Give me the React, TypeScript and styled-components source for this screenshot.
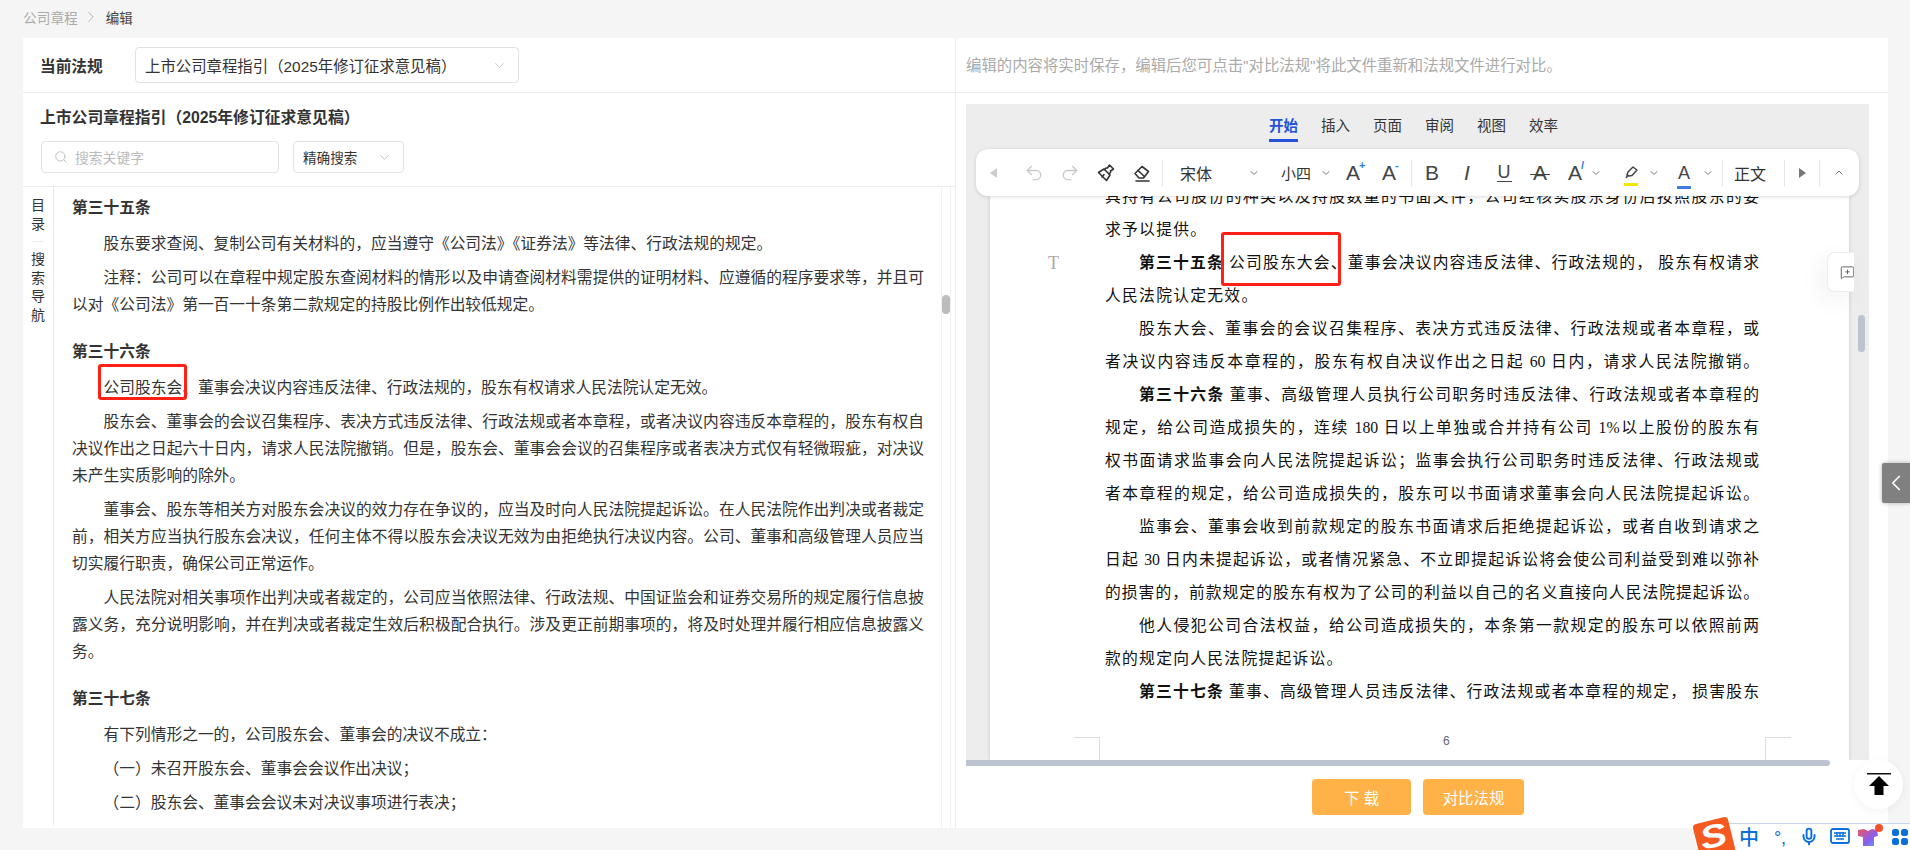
import React from "react";
import styled, { createGlobalStyle } from "styled-components";
import { ChevronDown, ChevronLeft, ChevronRight, ChevronUp, MessageSquarePlus, Mic, Redo2, Search, Undo2 } from "lucide-react";

const SANS = '"Liberation Sans", "Noto Sans CJK SC", sans-serif';
const SERIF = '"Liberation Serif", "Noto Sans CJK SC", serif';

const Global = createGlobalStyle`
  html, body { margin: 0; padding: 0; background: #f5f5f5; }
  body { font-family: ${SANS}; color: #333; }
  * { box-sizing: border-box; }
`;

const Screen = styled.div`
  position: relative;
  width: 1910px;
  height: 850px;
  overflow: hidden;
  background: #f5f5f5;
`;

const Crumbs = styled.div`
  height: 38px;
  padding-left: 23px;
  display: flex;
  align-items: center;
  gap: 4px;
  font-size: 13.7px;
  padding-bottom: 4px;
  color: #aaa;
  svg { color: #999; }
  b { font-weight: 400; color: #444; margin-left: 2px; font-size: 13.5px; }
`;

const Shell = styled.div`
  margin-left: 23px;
  width: 1865px;
  height: 790px;
  background: #fff;
  display: grid;
  grid-template-columns: 933px 1fr;
`;

const LeftPanel = styled.section`
  display: flex;
  flex-direction: column;
  min-height: 0;
  border-right: 1px solid #ececec;
`;

const RightPanel = styled.section`
  display: flex;
  flex-direction: column;
  min-height: 0;
`;

const HeadRow = styled.div`
  height: 55px;
  flex: none;
  display: flex;
  align-items: center;
  border-bottom: 1px solid #ececec;
  padding-left: 17px;
`;

const RuleLabel = styled.span`
  font-size: 15.7px;
  font-weight: 700;
  color: #333;
  width: 95px;
`;

const SelectBox = styled.div<{ $w: number; $h: number; $size: number }>`
  width: ${(p) => p.$w}px;
  height: ${(p) => p.$h}px;
  font-size: ${(p) => p.$size}px;
  border: 1px solid #e2e2e2;
  border-radius: 4px;
  display: flex;
  align-items: center;
  justify-content: space-between;
  padding: 0 11px 0 9px;
  color: #333;
  svg { color: #bbb; flex: none; }
`;

const Notice = styled.div`
  height: 55px;
  flex: none;
  display: flex;
  align-items: center;
  padding: 0 0 3px 10px;
  font-size: 15.4px;
  color: #aaa;
  border-bottom: 1px solid #ececec;
`;

const TitleBlock = styled.div`
  flex: none;
  height: 94px;
  padding: 14px 17px 0 17px;
  border-bottom: 1px solid #ececec;
`;

const DocTitle = styled.div`
  font-size: 15.8px;
  line-height: 22px;
  font-weight: 700;
  color: #333;
  margin-bottom: 12px;
`;

const SearchRow = styled.div`
  display: flex;
  gap: 14px;
  padding-left: 1px;
`;

const SearchBox = styled.div`
  width: 238px;
  height: 32px;
  border: 1px solid #e2e2e2;
  border-radius: 4px;
  display: flex;
  align-items: center;
  gap: 7px;
  padding-left: 12px;
  font-size: 13.8px;
  color: #bbb;
`;

const ReadArea = styled.div`
  flex: 1;
  min-height: 0;
  display: flex;
  overflow: hidden;
`;

const SideTabs = styled.nav`
  width: 31px;
  height: 638px;
  flex: none;
  border-right: 1px solid #e8e8e8;
  padding-top: 9px;
  display: flex;
  flex-direction: column;
  align-items: center;
  font-size: 14px;
  line-height: 18.6px;
  color: #333;
`;

const SideSep = styled.i`
  width: 12px;
  height: 1px;
  background: #ececec;
  margin: 8px 0;
`;

const Article = styled.article`
  width: 852px;
  margin-left: 18px;
  padding-top: 7px;
  font-size: 15.74px;
  line-height: 27px;
  color: #333;
  flex: none;
`;

const Heading = styled.h4`
  margin: 20px 0 9px;
  font-size: 15.74px;
  line-height: 27px;
  font-weight: 700;
  &:first-child { margin-top: 0; }
`;

const Para = styled.p`
  margin: 0 0 7px;
  text-indent: 2em;
  text-align: justify;
`;

const Boxed = styled.span`
  position: relative;
  &::after {
    content: "";
    position: absolute;
    left: -5px;
    right: -5px;
    top: -15px;
    bottom: -4px;
    border: 3.5px solid #ff2116;
    border-radius: 3px;
  }
`;

const BoxedBig = styled(Boxed)`
  &::after {
    left: -8px;
    right: -10px;
    top: -22px;
    bottom: -15px;
  }
`;

const LeftTrack = styled.div`
  width: 10px;
  height: 100%;
  margin-left: 17px;
  flex: none;
  border-left: 1px solid #f1f1f1;
  border-right: 1px solid #f1f1f1;
  padding-top: 108px;
`;

const LeftThumb = styled.div`
  width: 8px;
  height: 19px;
  background: #bdbdbd;
  border-radius: 4px;
`;

const EditorWrap = styled.div`
  padding: 11px 19px 0 10px;
  flex: 1;
  min-height: 0;
  display: flex;
  flex-direction: column;
`;

const Editor = styled.div`
  height: 656px;
  background: #ededed;
  display: flex;
  flex-direction: column;
  flex: none;
  overflow: hidden;
`;

const TabBar = styled.div`
  height: 45px;
  flex: none;
  display: flex;
  justify-content: center;
  gap: 23px;
  margin-left: -8px;
`;

const Tab = styled.div<{ $on?: boolean }>`
  font-size: 14.5px;
  line-height: 44px;
  height: 38px;
  color: ${(p) => (p.$on ? "#2452d8" : "#333")};
  font-weight: ${(p) => (p.$on ? 700 : 400)};
  border-bottom: ${(p) => (p.$on ? "3px solid #2452d8" : "none")};
`;

const Toolbar = styled.div`
  position: relative;
  z-index: 2;
  margin-left: 10px;
  width: 883px;
  height: 47px;
  flex: none;
  background: #fff;
  border-radius: 12px;
  box-shadow: 0 1px 4px rgba(0, 0, 0, 0.14);
  display: flex;
  align-items: center;
`;

const Tool = styled.div<{ $w: number; $ml?: number; $size?: number; $dim?: boolean }>`
  width: ${(p) => p.$w}px;
  margin-left: ${(p) => p.$ml ?? 0}px;
  flex: none;
  display: flex;
  align-items: center;
  justify-content: center;
  position: relative;
  font-size: ${(p) => p.$size ?? 16}px;
  color: ${(p) => (p.$dim ? "#c9c9c9" : "#333")};
  white-space: nowrap;
`;

const ToolSep = styled.i<{ $ml: number }>`
  width: 1px;
  height: 26px;
  margin-left: ${(p) => p.$ml}px;
  background: #e6e6e6;
  flex: none;
`;

const CapA = styled.span<{ $size?: number; $italic?: boolean }>`
  font-size: ${(p) => p.$size ?? 21}px;
  line-height: 22px;
  font-style: ${(p) => (p.$italic ? "italic" : "normal")};
  color: #444;
  position: relative;
`;

const Mark = styled.sup<{ $c?: string }>`
  position: absolute;
  left: 92%;
  top: -2px;
  font-size: 11px;
  font-weight: 700;
  line-height: 10px;
  color: ${(p) => p.$c ?? "#2d7be5"};
`;

const StrikeA = styled(CapA)`
  &::after {
    content: "";
    position: absolute;
    left: -3px;
    right: -3px;
    top: 12px;
    height: 1.5px;
    background: #444;
  }
`;

const UnderU = styled(CapA)`
  border-bottom: 1.5px solid #444;
  line-height: 18px;
  padding: 0 1px;
  font-size: 18px;
`;

const ColorBar = styled.i<{ $c: string }>`
  position: absolute;
  left: 50%;
  margin-left: -7px;
  bottom: -5px;
  width: 14px;
  height: 3px;
  background: ${(p) => p.$c};
`;

const DocRow = styled.div`
  flex: 1;
  min-height: 0;
  display: flex;
  position: relative;
`;

const Page = styled.div`
  position: relative;
  margin-left: 24px;
  width: 859px;
  flex: none;
  background: #fff;
  padding-left: 115px;
  box-shadow: 0 0 4px rgba(0, 0, 0, 0.16);
  overflow: hidden;
  font-family: ${SERIF};
  font-size: 15.8px;
  color: #111;
`;

const DocBody = styled.div`
  width: 654px;
  margin-top: -16px;
`;

const DocLine = styled.div<{ $indent?: boolean; $short?: boolean }>`
  height: 33px;
  line-height: 33px;
  text-indent: ${(p) => (p.$indent ? "34px" : "0")};
  text-align: justify;
  text-align-last: ${(p) => (p.$short ? "left" : "justify")};
  letter-spacing: ${(p) => (p.$short ? "1.25px" : "0")};
  b { font-weight: 700; }
`;

const PageNo = styled.span`
  position: absolute;
  left: 453px;
  top: 538px;
  font-size: 12px;
  color: #666;
  font-family: ${SANS};
`;

const CropMark = styled.i<{ $side: "left" | "right" }>`
  position: absolute;
  top: 541px;
  left: ${(p) => (p.$side === "left" ? 84 : 775)}px;
  width: 26px;
  height: 30px;
  border-top: 1px solid #ddd;
  ${(p) => (p.$side === "left" ? "border-right" : "border-left")}: 1px solid #ddd;
`;

const Gutter = styled.div`
  flex: 1;
  padding: 119px 0 0 9px;
`;

const GutterThumb = styled.div`
  width: 7px;
  height: 37px;
  border-radius: 4px;
  background: #bcc4d0;
`;

const MarginT = styled.span`
  position: absolute;
  left: 58px;
  top: 57px;
  font-family: ${SERIF};
  font-size: 18px;
  color: #aaa;
`;

const CommentTab = styled.div`
  position: absolute;
  left: 861px;
  top: 56px;
  width: 27px;
  height: 40px;
  background: #fff;
  border-radius: 8px 0 0 8px;
  border: 1px solid #eee;
  border-right: 0;
  overflow: hidden;
  padding: 12px 0 0 12px;
  color: #666;
  box-shadow: -6px 8px 24px rgba(0, 0, 0, 0.06);
`;

const HBar = styled.div`
  width: 864px;
  height: 6px;
  background: #bcc4d0;
  border-radius: 0 3px 3px 0;
  flex: none;
`;

const ButtonRow = styled.div`
  display: flex;
  gap: 12px;
  margin: 13px 0 0 346px;
`;

const ActionBtn = styled.button<{ $w: number }>`
  width: ${(p) => p.$w}px;
  height: 36px;
  border: 0;
  border-radius: 4px;
  background: #ffb248;
  color: #fff;
  font-size: 15.4px;
  font-family: ${SANS};
  padding: 0;
`;

const CollapseTab = styled.div`
  position: absolute;
  top: 463px;
  right: 0;
  width: 28px;
  height: 40px;
  background: #808080;
  border-radius: 2px 0 0 2px;
  display: flex;
  align-items: center;
  justify-content: center;
  color: #fff;
  box-shadow: 0 0 4px rgba(0, 0, 0, 0.3);
`;

const BackTop = styled.div`
  position: absolute;
  left: 1854px;
  top: 760px;
  width: 49px;
  height: 49px;
  border-radius: 50%;
  background: #fff;
  box-shadow: 0 2px 8px rgba(0, 0, 0, 0.05);
  display: flex;
  align-items: center;
  justify-content: center;
`;

const Ime = styled.div`
  position: absolute;
  left: 1703px;
  right: 0;
  bottom: 0;
  height: 27px;
  background: #fff;
  border-top: 1px solid #c8d6e8;
  color: #0a6fdc;
`;

const ImeLogo = styled.div`
  position: absolute;
  left: 1696px;
  top: 820px;
  width: 36px;
  height: 36px;
  background: #f4591f;
  border-radius: 4px;
  transform: rotate(-14deg);
  color: #fff;
  font: italic 700 32px/33px ${SANS};
  text-align: center;
  overflow: hidden;
  span { display: inline-block; transform: scaleX(1.25); }
`;

const ImeDot = styled.i`
  position: absolute;
  left: 1875px;
  top: 824px;
  width: 8px;
  height: 8px;
  border-radius: 50%;
  background: #f4502a;
`;

const ImeItem = styled.span<{ $x: number; $size?: number }>`
  position: absolute;
  left: ${(p) => p.$x - 1703}px;
  top: 3px;
  transform: translateX(-50%);
  font-size: ${(p) => p.$size ?? 18}px;
  line-height: 22px;
  font-weight: 500;
  white-space: nowrap;
`;

const leftDoc: { h?: string; p?: React.ReactNode }[] = [
  { h: "第三十五条" },
  { p: "股东要求查阅、复制公司有关材料的，应当遵守《公司法》《证券法》等法律、行政法规的规定。" },
  { p: "注释：公司可以在章程中规定股东查阅材料的情形以及申请查阅材料需提供的证明材料、应遵循的程序要求等，并且可以对《公司法》第一百一十条第二款规定的持股比例作出较低规定。" },
  { h: "第三十六条" },
  { p: <><Boxed>公司股东会</Boxed>、董事会决议内容违反法律、行政法规的，股东有权请求人民法院认定无效。</> },
  { p: "股东会、董事会的会议召集程序、表决方式违反法律、行政法规或者本章程，或者决议内容违反本章程的，股东有权自决议作出之日起六十日内，请求人民法院撤销。但是，股东会、董事会会议的召集程序或者表决方式仅有轻微瑕疵，对决议未产生实质影响的除外。" },
  { p: "董事会、股东等相关方对股东会决议的效力存在争议的，应当及时向人民法院提起诉讼。在人民法院作出判决或者裁定前，相关方应当执行股东会决议，任何主体不得以股东会决议无效为由拒绝执行决议内容。公司、董事和高级管理人员应当切实履行职责，确保公司正常运作。" },
  { p: "人民法院对相关事项作出判决或者裁定的，公司应当依照法律、行政法规、中国证监会和证券交易所的规定履行信息披露义务，充分说明影响，并在判决或者裁定生效后积极配合执行。涉及更正前期事项的，将及时处理并履行相应信息披露义务。" },
  { h: "第三十七条" },
  { p: "有下列情形之一的，公司股东会、董事会的决议不成立：" },
  { p: "（一）未召开股东会、董事会会议作出决议；" },
  { p: "（二）股东会、董事会会议未对决议事项进行表决；" },
];

const tabs = ["开始", "插入", "页面", "审阅", "视图", "效率"];

function BrushIcon() {
  return (
    <svg width="20" height="20" viewBox="0 0 20 20" fill="none" stroke="#333" strokeWidth="1.6" strokeLinejoin="round" strokeLinecap="round">
      <path d="M2.5 9.5 8 6l6 6-3.5 5.5z" />
      <path d="M8.5 6.5 10 5l1.5 0 2-3 4 4-3 2v1.5L13 11" />
      <path d="M6 14l2-2.500" />
    </svg>
  );
}

function EraserIcon() {
  return (
    <svg width="20" height="20" viewBox="0 0 20 20" fill="none" stroke="#333" strokeWidth="1.6" strokeLinejoin="round" strokeLinecap="round">
      <path d="M3 10.500 10 3.500l6.500 5-5 6.500H7z" />
      <path d="M6 7.500l6.500 6" />
      <path d="M4 18h13" />
    </svg>
  );
}

function PenIcon() {
  return (
    <svg width="18" height="16" viewBox="0 0 18 16" fill="none" stroke="#444" strokeWidth="1.5" strokeLinejoin="round">
      <path d="M5 10l1-3 5-5 4 3-5 5.500-3 .5z" />
      <path d="M4 13l2-3" />
    </svg>
  );
}

function Caret() {
  return <ChevronDown size={14} color="#777" strokeWidth={2} />;
}

function TriLeft() {
  return (
    <svg width="9" height="12" viewBox="0 0 9 12"><path d="M8 1v10L1 6z" fill="#ccc" /></svg>
  );
}

function TriRight() {
  return (
    <svg width="9" height="12" viewBox="0 0 9 12"><path d="M1 1v10l7-5z" fill="#777" /></svg>
  );
}

function ToolbarStrip() {
  return (
    <Toolbar>
      <Tool $w={34}><TriLeft /></Tool>
      <Tool $w={36} $ml={6} $dim><Undo2 size={20} strokeWidth={1.6} /></Tool>
      <Tool $w={36} $dim><Redo2 size={20} strokeWidth={1.6} /></Tool>
      <Tool $w={36}><BrushIcon /></Tool>
      <Tool $w={36}><EraserIcon /></Tool>
      <ToolSep $ml={2} />
      <Tool $w={32} $ml={17}>宋体</Tool>
      <Tool $w={12} $ml={36}><Caret /></Tool>
      <Tool $w={30} $ml={21} $size={15}>小四</Tool>
      <Tool $w={12} $ml={9}><Caret /></Tool>
      <Tool $w={36} $ml={3}><CapA>A<Mark>+</Mark></CapA></Tool>
      <Tool $w={36}><CapA>A<Mark>-</Mark></CapA></Tool>
      <ToolSep $ml={4} />
      <Tool $w={36} $ml={2}><CapA>B</CapA></Tool>
      <Tool $w={36} $ml={-1}><CapA $italic>I</CapA></Tool>
      <Tool $w={36} $ml={1}><UnderU>U</UnderU></Tool>
      <Tool $w={36}><StrikeA>A</StrikeA></Tool>
      <Tool $w={34}><CapA>A<Mark>/</Mark></CapA></Tool>
      <Tool $w={12} $ml={-2}><Caret /></Tool>
      <Tool $w={36} $ml={11}><PenIcon /><ColorBar $c="#f5e600" /></Tool>
      <Tool $w={12} $ml={-1}><Caret /></Tool>
      <Tool $w={36} $ml={6}><CapA $size={18}>A</CapA><ColorBar $c="#3f7be0" /></Tool>
      <Tool $w={12}><Caret /></Tool>
      <ToolSep $ml={8} />
      <Tool $w={32} $ml={11}>正文</Tool>
      <ToolSep $ml={18} />
      <Tool $w={12} $ml={11}><TriRight /></Tool>
      <ToolSep $ml={11} />
      <Tool $w={12} $ml={13}><ChevronUp size={17} color="#777" strokeWidth={2} /></Tool>
    </Toolbar>
  );
}

export default function App() {
  return (
    <Screen>
      <Global />
      <Crumbs>
        公司章程
        <ChevronRight size={18} strokeWidth={1} />
        <b>编辑</b>
      </Crumbs>
      <Shell>
        <LeftPanel>
          <HeadRow>
            <RuleLabel>当前法规</RuleLabel>
            <SelectBox $w={384} $h={36} $size={15.4}>
              上市公司章程指引（2025年修订征求意见稿）
              <ChevronDown size={15} strokeWidth={1.3} />
            </SelectBox>
          </HeadRow>
          <TitleBlock>
            <DocTitle>上市公司章程指引（2025年修订征求意见稿）</DocTitle>
            <SearchRow>
              <SearchBox>
                <Search size={14} color="#bbb" strokeWidth={1.6} />
                搜索关键字
              </SearchBox>
              <SelectBox $w={111} $h={32} $size={13.6}>
                精确搜索
                <ChevronDown size={15} strokeWidth={1.3} />
              </SelectBox>
            </SearchRow>
          </TitleBlock>
          <ReadArea>
            <SideTabs>
              <span>目</span>
              <span>录</span>
              <SideSep />
              <span>搜</span>
              <span>索</span>
              <span>导</span>
              <span>航</span>
            </SideTabs>
            <Article>
              {leftDoc.map((item, i) =>
                item.h ? <Heading key={i}>{item.h}</Heading> : <Para key={i}>{item.p}</Para>
              )}
            </Article>
            <LeftTrack>
              <LeftThumb />
            </LeftTrack>
          </ReadArea>
        </LeftPanel>
        <RightPanel>
          <Notice>编辑的内容将实时保存，编辑后您可点击"对比法规"将此文件重新和法规文件进行对比。</Notice>
          <EditorWrap>
            <Editor>
              <TabBar>
                {tabs.map((t, i) => (
                  <Tab key={t} $on={i === 0}>{t}</Tab>
                ))}
              </TabBar>
              <ToolbarStrip />
              <DocRow>
                <Page>
                  <MarginT>T</MarginT>
                  <DocBody>
                    <DocLine>具持有公司股份的种类以及持股数量的书面文件，公司经核实股东身份后按照股东的要</DocLine>
                    <DocLine $short>求予以提供。</DocLine>
                    <DocLine $indent><b>第三十五条</b> <BoxedBig>公司股东大会</BoxedBig>、董事会决议内容违反法律、行政法规的， 股东有权请求</DocLine>
                    <DocLine $short>人民法院认定无效。</DocLine>
                    <DocLine $indent>股东大会、董事会的会议召集程序、表决方式违反法律、行政法规或者本章程，或</DocLine>
                    <DocLine>者决议内容违反本章程的，股东有权自决议作出之日起 60 日内，请求人民法院撤销。</DocLine>
                    <DocLine $indent><b>第三十六条</b> 董事、高级管理人员执行公司职务时违反法律、行政法规或者本章程的</DocLine>
                    <DocLine>规定，给公司造成损失的，连续 180 日以上单独或合并持有公司 1%以上股份的股东有</DocLine>
                    <DocLine>权书面请求监事会向人民法院提起诉讼；监事会执行公司职务时违反法律、行政法规或</DocLine>
                    <DocLine>者本章程的规定，给公司造成损失的，股东可以书面请求董事会向人民法院提起诉讼。</DocLine>
                    <DocLine $indent>监事会、董事会收到前款规定的股东书面请求后拒绝提起诉讼，或者自收到请求之</DocLine>
                    <DocLine>日起 30 日内未提起诉讼，或者情况紧急、不立即提起诉讼将会使公司利益受到难以弥补</DocLine>
                    <DocLine>的损害的，前款规定的股东有权为了公司的利益以自己的名义直接向人民法院提起诉讼。</DocLine>
                    <DocLine $indent>他人侵犯公司合法权益，给公司造成损失的，本条第一款规定的股东可以依照前两</DocLine>
                    <DocLine $short>款的规定向人民法院提起诉讼。</DocLine>
                    <DocLine $indent><b>第三十七条</b> 董事、高级管理人员违反法律、行政法规或者本章程的规定， 损害股东</DocLine>
                  </DocBody>
                  <CropMark $side="left" />
                  <CropMark $side="right" />
                  <PageNo>6</PageNo>
                </Page>
                <Gutter>
                  <GutterThumb />
                </Gutter>
                <CommentTab>
                  <MessageSquarePlus size={15} strokeWidth={1.6} />
                </CommentTab>
              </DocRow>
            </Editor>
            <HBar />
            <ButtonRow>
              <ActionBtn $w={99}>下 载</ActionBtn>
              <ActionBtn $w={101}>对比法规</ActionBtn>
            </ButtonRow>
          </EditorWrap>
        </RightPanel>
      </Shell>
      <CollapseTab>
        <ChevronLeft size={26} strokeWidth={1.6} />
      </CollapseTab>
      <BackTop>
        <svg width="26" height="26" viewBox="0 0 26 26">
          <rect x="1" y="1" width="24" height="1.500" fill="#111" />
          <path d="M13 4 23 14h-5.500v9h-9v-9H3z" fill="#000" />
        </svg>
      </BackTop>
      <Ime>
        <ImeItem $x={1749} $size={20}>中</ImeItem>
        <ImeItem $x={1780} $size={18}>°,</ImeItem>
        <ImeItem $x={1809}><Mic size={19} strokeWidth={2.4} /></ImeItem>
        <ImeItem $x={1840}>
          <svg width="20" height="16" viewBox="0 0 20 16" fill="none" stroke="#0a6fdc" strokeWidth="1.800">
            <rect x="1" y="1" width="18" height="14" rx="2" />
            <path d="M4 5h12M4 8h12M6 11h8M7 4v5M10 4v5M13 4v5" strokeWidth="1.400" />
          </svg>
        </ImeItem>
        <ImeItem $x={1868}>
          <svg width="24" height="22" viewBox="0 0 24 22">
            <defs>
              <linearGradient id="shirt" x1="0" y1="0" x2="1" y2="1">
                <stop offset="0" stopColor="#f0565a" />
                <stop offset="0.6" stopColor="#8a5cf0" />
                <stop offset="1" stopColor="#5aa8f8" />
              </linearGradient>
            </defs>
            <path d="M2 3l6-1 4 2 4-2 5 1 1 6-4 1v9H7v-9L2 9z" fill="url(#shirt)" />
          </svg>
        </ImeItem>
        <ImeItem $x={1900}>
          <svg width="20" height="20" viewBox="0 0 20 20" fill="#0a6fdc">
            <rect x="2" y="2" width="7" height="7" rx="2.500" />
            <rect x="11" y="2" width="7" height="7" rx="2.500" />
            <rect x="2" y="11" width="7" height="7" rx="2.500" />
            <rect x="11" y="11" width="7" height="7" rx="2.500" />
          </svg>
        </ImeItem>
      </Ime>
      <ImeDot />
      <ImeLogo><span>S</span></ImeLogo>
    </Screen>
  );
}
